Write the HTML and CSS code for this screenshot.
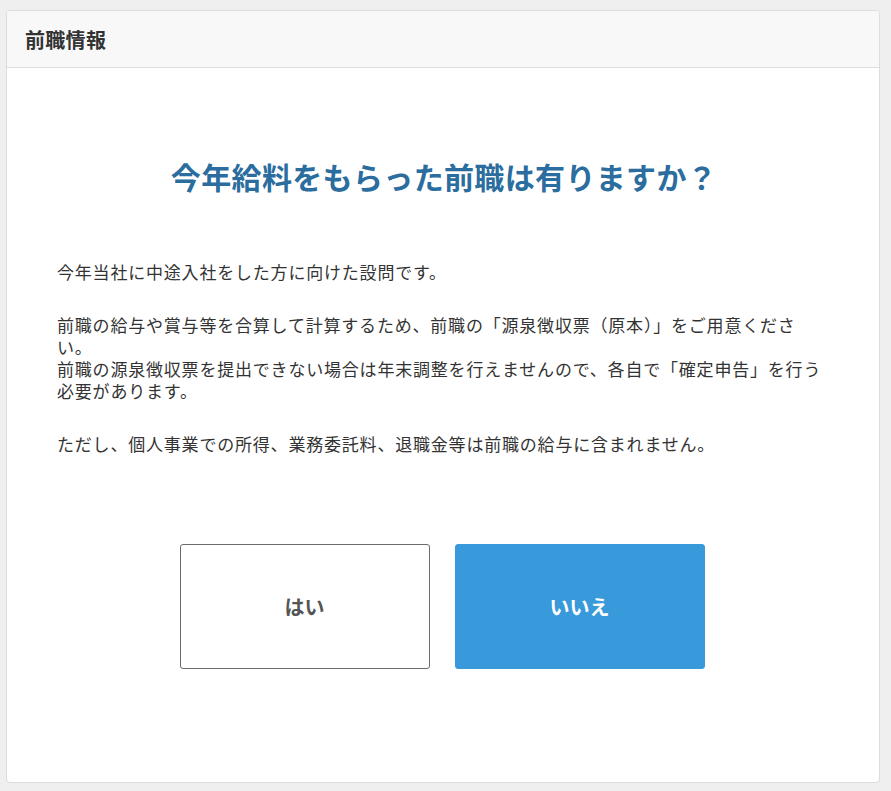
FILE: index.html
```html
<!DOCTYPE html>
<html lang="ja">
<head>
<meta charset="utf-8">
<title>前職情報</title>
<link rel="stylesheet" href="styles.css">
</head>
<body>
<div class="card">
  <div class="card-header">前職情報</div>
  <div class="card-body">
    <h1 class="question">今年給料をもらった前職は有りますか？</h1>
    <div class="desc">
      <p>今年当社に中途入社をした方に向けた設問です。</p>
      <p>前職の給与や賞与等を合算して計算するため、前職の「源泉徴収票（原本）」をご用意ください。<br>前職の源泉徴収票を提出できない場合は年末調整を行えませんので、各自で「確定申告」を行う必要があります。</p>
      <p>ただし、個人事業での所得、業務委託料、退職金等は前職の給与に含まれません。</p>
    </div>
    <div class="actions">
      <button class="btn btn-yes" type="button">はい</button>
      <button class="btn btn-no" type="button">いいえ</button>
    </div>
  </div>
</div>
</body>
</html>
```
FILE: styles.css
```css
html, body {
  margin: 0;
  padding: 0;
  background: #efefef;
}
body {
  font-family: "Noto Sans CJK JP", "Noto Sans", sans-serif;
  color: #333;
  padding: 10px 11px 0 6px;
  height: 791px;
  box-sizing: border-box;
  overflow: hidden;
}
.card {
  background: #fff;
  border: 1px solid #dcdcdc;
  border-radius: 4px;
  overflow: hidden;
}
.card-header {
  background: #f8f8f8;
  border-bottom: 1px solid #dddddd;
  height: 57px;
  box-sizing: border-box;
  padding: 0 0 0 18px;
  display: flex;
  align-items: center;
  font-size: 20px;
  font-weight: 700;
  letter-spacing: 0.3px;
  color: #333;
}
.card-body {
  padding: 88px 48px 113px 50px;
}
.question {
  margin: 0 0 65px;
  text-align: center;
  font-size: 30px;
  line-height: 40px;
  font-weight: 700;
  letter-spacing: 0.35px;
  color: #2a6d9e;
}
.desc p {
  margin: 0 0 31px;
  font-size: 17px;
  line-height: 22px;
  letter-spacing: 0.8px;
  color: #333;
}
.desc p:last-child {
  margin-bottom: 0;
}
.actions {
  margin-top: 89px;
  display: flex;
  justify-content: center;
  gap: 25px;
  padding-right: 4px;
}
.btn {
  width: 250px;
  height: 125px;
  border-radius: 3px;
  font-family: "Noto Sans CJK JP", "Noto Sans", sans-serif;
  font-size: 20px;
  font-weight: 700;
  cursor: pointer;
}
.btn-yes {
  background: #fff;
  border: 1px solid #6b6b6b;
  color: #555;
}
.btn-no {
  background: #3899db;
  border: 1px solid #3899db;
  color: #fff;
}
```
